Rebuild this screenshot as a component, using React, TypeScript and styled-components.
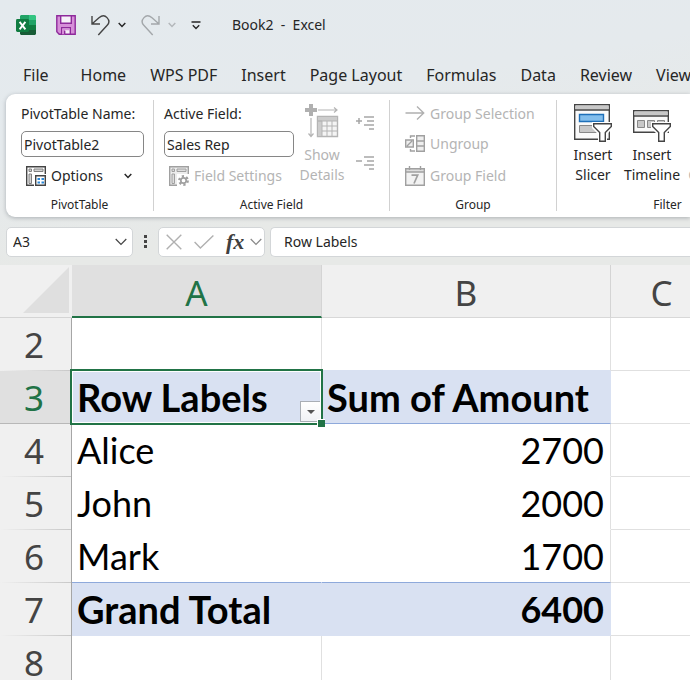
import React from "react";
import styled, { createGlobalStyle } from "styled-components";

const GlobalStyle = createGlobalStyle`
  * { box-sizing: border-box; }
  body { margin: 0; background: #fff; }
  button, input { font: inherit; color: inherit; margin: 0; padding: 0; border: 0; background: none; }
  button { cursor: pointer; }
  button:disabled { cursor: default; }
`;

const Window = styled.div`
  min-height: 100vh;
  overflow: hidden;
  display: flex;
  flex-direction: column;
  font-family: "Noto Sans", "Open Sans", sans-serif;
  font-size: 14px;
  line-height: 20px;
  color: #262626;
  background: linear-gradient(170deg, #e4eaee 0, #e5eaed 150px, #e7e9e7 270px);
  svg { display: block; flex: none; }
`;

const TitleBar = styled.header`
  display: flex;
  align-items: center;
  height: 50px;
  padding: 0 16px;
`;

const QuickTools = styled.div`
  display: flex;
  align-items: center;
  gap: 15px;
  margin-left: 20px;
`;

const ToolPair = styled.div`
  display: flex;
  align-items: center;
  gap: 8px;
`;

const IconButton = styled.button`
  display: flex;
  align-items: center;
  justify-content: center;
`;

const WindowTitle = styled.h1`
  margin: 0 0 0 31px;
  font-size: 14px;
  font-weight: 400;
  white-space: pre;
`;

const TabList = styled.nav`
  display: flex;
  align-items: center;
  gap: 24px;
  height: 44px;
  padding: 5px 0 0 23px;
  font-size: 16px;
`;

const Tab = styled.button<{ $file?: boolean }>`
  flex: none;
  white-space: nowrap;
  margin-right: ${(p) => (p.$file ? 8 : 0)}px;
`;

const Ribbon = styled.section`
  display: flex;
  margin-left: 6px;
  padding: 6px 0;
  background: #fff;
  border-radius: 9px 0 0 9px;
  box-shadow: 0 1px 4px rgba(60, 70, 80, 0.35);
`;

const Group = styled.div<{ $width: number }>`
  flex: none;
  width: ${(p) => p.$width}px;
  border-right: 1px solid #d1d1d1;
  display: flex;
  flex-direction: column;
`;

const GroupBody = styled.div<{ $pad: number }>`
  display: flex;
  height: 98px;
  padding-left: ${(p) => p.$pad}px;
`;

const GroupName = styled.div`
  font-size: 12px;
  line-height: 13px;
  text-align: center;
`;

const Stack = styled.div<{ $width: number }>`
  flex: none;
  width: ${(p) => p.$width}px;
  display: grid;
  grid-template-rows: 28px 32px 32px;
  align-items: center;
  white-space: nowrap;
`;

const Field = styled.input`
  width: 100%;
  height: 26px;
  padding: 0 2px;
  border: 1px solid #868686;
  border-radius: 5px;
  background: #fff;
`;

const Command = styled.button`
  display: flex;
  align-items: center;
  gap: 5px;
  padding-left: 5px;
  white-space: nowrap;
  &:disabled { color: #b4b4b4; }
`;

const OptionsCommand = styled(Command)`
  padding-right: 12px;
`;

const PlainCommand = styled(Command)`
  padding-left: 0;
`;

const CommandText = styled.span`
  flex: 1;
  text-align: left;
`;

const BigCommand = styled.button<{ $width: number }>`
  flex: none;
  width: ${(p) => p.$width}px;
  display: flex;
  flex-direction: column;
  align-items: center;
  gap: 3px;
  padding-top: 4px;
  height: 90px;
  &:disabled { color: #b4b4b4; }
`;

const SideCommands = styled.div`
  display: flex;
  flex-direction: column;
  gap: 24px;
  padding: 15px 0 0 6px;
`;

const FormulaBar = styled.div`
  display: flex;
  align-items: center;
  height: 48px;
  padding: 1px 0 0 6px;
`;

const BarBox = styled.div`
  display: flex;
  align-items: center;
  height: 30px;
  background: #fff;
  border: 1px solid #d3d6d8;
  border-radius: 5px;
`;

const NameBox = styled(BarBox)`
  flex: none;
  width: 127px;
  padding: 0 5px 0 6px;
`;

const FormulaTools = styled(BarBox)`
  flex: none;
  gap: 12px;
  width: 107px;
  padding: 0 3px 0 7px;
  margin-right: 5px;
`;

const FormulaBox = styled(BarBox)`
  flex: 1;
  padding-left: 13px;
  border-right: 0;
  border-radius: 5px 0 0 5px;
`;

const FxPair = styled(ToolPair)`
  gap: 6px;
`;

const BarInput = styled.input`
  flex: 1;
  min-width: 0;
  height: 28px;
`;

const Dots = styled.div`
  width: 25px;
  display: flex;
  justify-content: center;
`;

const SheetArea = styled.main`
  flex: 1;
  overflow: hidden;
  background: #fff;
`;

const Sheet = styled.table`
  width: 100%;
  min-width: 713px;
  table-layout: fixed;
  border-collapse: separate;
  border-spacing: 0;
  font-family: Lato, Carlito, sans-serif;
  font-size: 36px;
  line-height: 44px;
  color: #000;
`;

const Col = styled.col<{ $width?: number }>`
  width: ${(p) => (p.$width ? `${p.$width}px` : "auto")};
`;

const Corner = styled.td`
  padding: 0 3px 3px 0;
  background: #f0f0f0;
  border-bottom: 1px solid #d4d4d4;
  svg { margin-left: auto; }
`;

const HeadCell = styled.th<{ $active?: boolean }>`
  height: 53px;
  font-family: "Noto Sans", "Open Sans", sans-serif;
  font-size: 35px;
  font-weight: 400;
  color: ${(p) => (p.$active ? "#217346" : "#444")};
`;

const ColumnHead = styled(HeadCell)`
  padding: 4px 0 0;
  background: ${(p) => (p.$active ? "#e0e0e0" : "#f0f0f0")};
  border-bottom: ${(p) => (p.$active ? "2px solid #217346" : "1px solid #d8d8d8")};
  border-right: 1px solid #d4d4d4;
`;

const RowHead = styled(HeadCell)`
  padding: 1px 3px 0 0;
  background: ${(p) =>
    p.$active
      ? "linear-gradient(#b8b8b8, #b8b8b8) bottom / 100% 1px no-repeat #e0e0e0"
      : "linear-gradient(90deg, #f0f0f0, #c8c8c8) bottom / 100% 1px no-repeat #f0f0f0"};
  border-right: 1px solid #a6a6a6;
`;

type CellLook = { $band?: boolean; $number?: boolean; $line?: string; $open?: boolean };

const Cell = styled.td<CellLook>`
  position: relative;
  height: 53px;
  padding: 0 6px 0 5px;
  white-space: nowrap;
  text-align: ${(p) => (p.$number ? "right" : "left")};
  font-size: ${(p) => (p.$band && !p.$number ? 38 : 36)}px;
  font-weight: ${(p) => (p.$band ? 700 : 400)};
  background: ${(p) => (p.$band ? "#d9e1f2" : "#fff")};
  background-clip: padding-box;
  border-bottom: 1px solid ${(p) => p.$line ?? "#e0e0e0"};
  border-right: 1px solid ${(p) => (p.$band ? "#d9e1f2" : p.$open ? "#fff" : "#e0e0e0")};
`;

const Selection = styled.div`
  position: absolute;
  inset: -2px;
  border: 2px solid #217346;
  box-shadow: inset 0 0 0 1px #fff;
  pointer-events: none;
  z-index: 1;
  &::after {
    content: "";
    position: absolute;
    right: -4px;
    bottom: -4px;
    width: 7px;
    height: 7px;
    background: #217346;
    border: 1px solid #fff;
    border-width: 1px 0 0 1px;
  }
`;

const FilterButton = styled.button`
  position: absolute;
  right: 0;
  bottom: 1px;
  width: 21px;
  height: 21px;
  display: flex;
  align-items: center;
  justify-content: center;
  background: linear-gradient(#fff, #f0f2f5);
  border: 1px solid #a9aeb5;
`;

const Chevron = ({ w = 8, color = "#262626" }: { w?: number; color?: string }) => (
  <svg width={w} height={w / 2 + 2} viewBox={`0 0 ${w} ${w / 2 + 2}`} fill="none" stroke={color} strokeWidth={w > 8 ? 1.2 : 1.5}>
    <path d={`M.7 1 L${w / 2} ${w / 2 + 0.4} L${w - 0.7} 1`} />
  </svg>
);

const ExcelIcon = () => (
  <svg width="20" height="20" viewBox="0 0 20 20">
    <path d="M5 0h8v5H4V1z" fill="#21a366" />
    <path d="M13 0h6l1 1v4h-7z" fill="#33c481" />
    <path d="M4 5h9v5H4z" fill="#107c41" />
    <path d="M13 5h7v5h-7z" fill="#21a366" />
    <path d="M4 10h9v5H4z" fill="#185c37" />
    <path d="M13 10h7v5h-7z" fill="#107c41" />
    <path d="M4 15h16v4l-1 1H5l-1-1z" fill="#185c37" />
    <rect x="0" y="4" width="13" height="13" rx="1.4" fill="#107c41" />
    <path d="M3.6 6.8l5.8 7.6M9.4 6.8l-5.8 7.6" stroke="#fff" strokeWidth="1.9" />
  </svg>
);

const SaveIcon = () => (
  <svg width="20" height="20" viewBox="0 0 20 20" fill="#d68fd8" stroke="#8e2a9b" strokeWidth="1.4">
    <path d="M.8.8h18.4v18.4H3.2L.8 16.8z" />
    <path d="M4.7.8h10.6v7.4H4.7z" fill="#f6f0f8" />
    <path d="M5.7 19.2v-6.4h8.6v6.4z" fill="#f6f0f8" />
    <path d="M6 13.5h8v1.8H9v4H6z" fill="#d68fd8" stroke="none" />
    <path d="M8.7 19v-3.2" />
  </svg>
);

const UndoIcon = ({ color, flip }: { color: string; flip?: boolean }) => (
  <svg width="19" height="21" viewBox="0 0 19 21" fill="none" stroke={color} strokeWidth="1.4">
    <path
      transform={flip ? "translate(19 0) scale(-1 1)" : undefined}
      d="M1 1v8h8M1.2 8.8 8 2.8C11 .2 14 .4 16 2.6c2.4 2.6 2.2 5.6.2 7.7L7.3 20"
    />
  </svg>
);

const CustomizeIcon = () => (
  <svg width="10" height="9" viewBox="0 0 10 9" fill="none" stroke="#262626" strokeWidth="1.4">
    <path d="M.5 1h9M1.8 4.2 5 7.4l3.2-3.2" />
  </svg>
);

const OptionsIcon = () => (
  <svg width="20" height="20" viewBox="0 0 20 20" fill="none">
    <path d="M8 19.3H.7V.7h18.6V8" stroke="#444" strokeWidth="1.4" />
    <path d="M3 3h2.5v2.5H3zM8 3h9v2.5H8zM3 8h2.5v9.5H3z" fill="#d4d4d4" stroke="#808080" />
    <path d="M9.7 9.7h9.6v9.6H9.700z" fill="#fff" stroke="#444" strokeWidth="1.4" />
    <path d="M11.5 12H14v2h-2.500zM15.500 12H18v2h-2.500zM11.500 15.500H14v2h-2.500zM15.500 15.500H18v2h-2.500z" fill="#2b88d8" />
  </svg>
);

const SettingsIcon = () => (
  <svg width="20" height="20" viewBox="0 0 20 20" fill="none" stroke="#a0a0a0">
    <path d="M.7.7h18.600v18.600H.7z" fill="#ededed" stroke="none" />
    <path d="M8 19.300H.7V.7h18.600V8" strokeWidth="1.400" />
    <path d="M3 3h2.500v2.500H3zM8 3h9v2.500H8zM3 8h2.500v9.500H3z" fill="#ddd" />
    <path d="M8 8h12v12H8z" fill="#fff" stroke="none" />
    <circle cx="14.500" cy="14.500" r="4.200" strokeWidth="2.400" strokeDasharray="2.200 2.200" />
    <circle cx="14.500" cy="14.500" r="2.700" strokeWidth="1.700" />
  </svg>
);

const DetailsIcon = () => (
  <svg width="34" height="38" viewBox="0 0 34 38" fill="none" stroke="#b4b4b4">
    <path d="M6 0v12M0 6h12" stroke="#b0b0b0" strokeWidth="4" />
    <path d="M13 6h19M29 3.500 32 6l-3 2.500M6 14v18M3.500 29.500 6 32.500l2.500-3" strokeWidth="1.200" />
    <path d="M12.500 12.500h20v20h-20z" fill="#f4f4f4" strokeWidth="1.400" />
    <path d="M12.500 12.500h20v4.500h-20zM12.500 17H17v15.500h-4.500z" fill="#ccc" />
    <path d="M17 22h15.500M17 27h15.500M22 17v15.500M27 17v15.500" />
  </svg>
);

const OutlineIcon = ({ plus }: { plus?: boolean }) => (
  <svg width="18" height="16" viewBox="0 0 18 16" fill="none" stroke="#a6a6a6" strokeWidth="1.500">
    <path d="M8 2h10M11 6h7M8 10h10M13 14h5" />
    <path d={plus ? "M0 6h6M3 3v6" : "M0 6h6"} />
  </svg>
);

const ArrowIcon = () => (
  <svg width="20" height="20" viewBox="0 0 20 20" fill="none" stroke="#b0b0b0" strokeWidth="1.400">
    <path d="M.5 9h18M12 2.500 18.700 9 12 15.500" />
  </svg>
);

const UngroupIcon = () => (
  <svg width="20" height="20" viewBox="0 0 20 20" fill="none" stroke="#a0a0a0" strokeWidth="1.400">
    <path d="M.7 6h7.600v7H.7zM2 12l5-5" fill="#eee" />
    <path d="M5.500 4V2H10M5.500 15v2H10" />
    <path d="M11.700 1.700h7.600v15.600h-7.600zM11.700 7h7.600M11.700 12h7.600" fill="#eee" />
  </svg>
);

const CalendarIcon = () => (
  <svg width="20" height="20" viewBox="0 0 20 20" fill="none" stroke="#a0a0a0" strokeWidth="1.400">
    <path d="M.7 2.700h18.600v16.600H.7z" fill="#f2f2f2" />
    <path d="M.7 2.700h18.600V6H.7z" fill="#ddd" />
    <path d="M4.500 0v4M15.500 0v4" />
    <path d="M6.500 9.200h6.200L9 17.500" strokeWidth="1.700" />
  </svg>
);

const Funnel = () => (
  <>
    <path d="M18 18h21v6l-6 6v8h-9v-8l-6-6z" fill="#fff" />
    <path d="M19.700 19.700h17.600v2.800l-6 6v8.800h-5.600v-8.800l-6-6z" fill="#fff" stroke="#444" strokeWidth="1.400" />
  </>
);

const SlicerIcon = () => (
  <svg width="38" height="38" viewBox="0 0 38 38" fill="none">
    <path d="M.7.7h34.600v34.600H.7z" fill="#fafafa" stroke="#444" strokeWidth="1.400" />
    <path d="M1.400 1.400h33.200v4H1.400z" fill="#c8c8c8" />
    <path d="M1 6h34" stroke="#444" strokeWidth="1.400" />
    <path d="M5.500 10.500h24v7h-24z" fill="#83beec" stroke="#1e6fb8" strokeWidth="1.400" />
    <path d="M5.500 21.500h17v7h-17z" fill="#c8c8c8" stroke="#888" />
    <Funnel />
  </svg>
);

const TimelineIcon = () => (
  <svg width="38" height="38" viewBox="0 0 38 38" fill="none">
    <path d="M.7 6.700h34.600v21.600H.7z" fill="#fafafa" stroke="#444" strokeWidth="1.400" />
    <path d="M1.400 7.400h33.200V11H1.400z" fill="#c8c8c8" />
    <path d="M1 12h34" stroke="#444" strokeWidth="1.400" />
    <path d="M4.500 16.500h7v7h-7zM14.500 16.500h7v7h-7zM24.500 16.500h7v7h-7z" fill="#c8c8c8" stroke="#888" />
    <Funnel />
  </svg>
);

const CancelIcon = () => (
  <svg width="16" height="16" viewBox="0 0 16 16" stroke="#b0b0b0" strokeWidth="1.400">
    <path d="M.7.7l14.600 14.600M15.300.7.7 15.300" />
  </svg>
);

const CheckIcon = () => (
  <svg width="20" height="14" viewBox="0 0 20 14" fill="none" stroke="#b0b0b0" strokeWidth="1.400">
    <path d="M.6 7l5.800 6L19.400.6" />
  </svg>
);

const FxButton = styled(IconButton)`
  font-family: "Liberation Serif", serif;
  font-size: 22px;
  font-style: italic;
  font-weight: 700;
  line-height: 24px;
  color: #404040;
`;

const TABS = ["File", "Home", "WPS PDF", "Insert", "Page Layout", "Formulas", "Data", "Review", "View"];

type RowData = { n: number; label?: string; total?: string; kind?: "head" | "item" | "total" };

const ROWS: RowData[] = [
  { n: 2 },
  { n: 3, label: "Row Labels", total: "Sum of Amount", kind: "head" },
  { n: 4, label: "Alice", total: "2700", kind: "item" },
  { n: 5, label: "John", total: "2000", kind: "item" },
  { n: 6, label: "Mark", total: "1700", kind: "item" },
  { n: 7, label: "Grand Total", total: "6400", kind: "total" },
  { n: 8 },
];

const lineUnder = (row: RowData) => {
  if (row.n === 3 || row.n === 6) return "#8ea9db";
  if (row.n === 2 || row.kind === "total") return "#d9e1f2";
  return row.kind === "item" ? "#fff" : "#e0e0e0";
};

export default function App() {
  return (
    <Window>
      <GlobalStyle />
      <TitleBar>
        <ExcelIcon />
        <QuickTools>
          <IconButton aria-label="Save"><SaveIcon /></IconButton>
          <ToolPair>
            <IconButton aria-label="Undo"><UndoIcon color="#444" /></IconButton>
            <IconButton aria-label="Undo history"><Chevron /></IconButton>
          </ToolPair>
          <ToolPair>
            <IconButton aria-label="Redo" disabled><UndoIcon color="#a3a7aa" flip /></IconButton>
            <IconButton aria-label="Redo history" disabled><Chevron color="#b4b8bb" /></IconButton>
          </ToolPair>
          <IconButton aria-label="Customize toolbar"><CustomizeIcon /></IconButton>
        </QuickTools>
        <WindowTitle>{"Book2  -  Excel"}</WindowTitle>
      </TitleBar>
      <TabList>
        {TABS.map((t) => <Tab key={t} $file={t === "File"}>{t}</Tab>)}
      </TabList>
      <Ribbon>
        <Group $width={148}>
          <GroupBody $pad={15}>
            <Stack $width={123}>
              <label htmlFor="pivot-name">PivotTable Name:</label>
              <Field id="pivot-name" defaultValue="PivotTable2" />
              <OptionsCommand><OptionsIcon /><CommandText>Options</CommandText><Chevron /></OptionsCommand>
            </Stack>
          </GroupBody>
          <GroupName>PivotTable</GroupName>
        </Group>
        <Group $width={236}>
          <GroupBody $pad={10}>
            <Stack $width={130}>
              <label htmlFor="active-field">Active Field:</label>
              <Field id="active-field" defaultValue="Sales Rep" />
              <Command disabled><SettingsIcon /><CommandText>Field Settings</CommandText></Command>
            </Stack>
            <BigCommand $width={56} disabled><DetailsIcon /><span>Show<br />Details</span></BigCommand>
            <SideCommands>
              <IconButton aria-label="Expand field" disabled><OutlineIcon plus /></IconButton>
              <IconButton aria-label="Collapse field" disabled><OutlineIcon /></IconButton>
            </SideCommands>
          </GroupBody>
          <GroupName>Active Field</GroupName>
        </Group>
        <Group $width={167}>
          <GroupBody $pad={15}>
            <Stack $width={140}>
              <PlainCommand disabled><ArrowIcon />Group Selection</PlainCommand>
              <PlainCommand disabled><UngroupIcon />Ungroup</PlainCommand>
              <PlainCommand disabled><CalendarIcon />Group Field</PlainCommand>
            </Stack>
          </GroupBody>
          <GroupName>Group</GroupName>
        </Group>
        <Group $width={222}>
          <GroupBody $pad={8}>
            <BigCommand $width={56}><SlicerIcon /><span>Insert<br />Slicer</span></BigCommand>
            <BigCommand $width={62}><TimelineIcon /><span>Insert<br />Timeline</span></BigCommand>
            <BigCommand $width={92} disabled><DetailsIcon /><span>Filter<br />Connections</span></BigCommand>
          </GroupBody>
          <GroupName>Filter</GroupName>
        </Group>
      </Ribbon>
      <FormulaBar>
        <NameBox>
          <BarInput aria-label="Name box" defaultValue="A3" />
          <IconButton aria-label="Names"><Chevron w={12} color="#444" /></IconButton>
        </NameBox>
        <Dots>
          <svg width="4" height="14" viewBox="0 0 4 14" fill="#444">
            <path d="M0 0h3v3H0zM0 5h3v3H0zM0 10h3v3H0z" />
          </svg>
        </Dots>
        <FormulaTools>
          <IconButton aria-label="Cancel" disabled><CancelIcon /></IconButton>
          <IconButton aria-label="Enter" disabled><CheckIcon /></IconButton>
          <FxPair>
            <FxButton aria-label="Insert function">fx</FxButton>
            <IconButton aria-label="Function list"><Chevron w={12} color="#888" /></IconButton>
          </FxPair>
        </FormulaTools>
        <FormulaBox>
          <BarInput aria-label="Formula" defaultValue="Row Labels" />
        </FormulaBox>
      </FormulaBar>
      <SheetArea>
        <Sheet>
          <colgroup>
            <Col $width={72} /><Col $width={250} /><Col $width={289} /><Col />
          </colgroup>
          <thead>
            <tr>
              <Corner>
                <svg width="46" height="46" viewBox="0 0 46 46"><path d="M46 0v46H0z" fill="#dfdfdf" /></svg>
              </Corner>
              <ColumnHead scope="col" $active>A</ColumnHead>
              <ColumnHead scope="col">B</ColumnHead>
              <ColumnHead scope="col">C</ColumnHead>
            </tr>
          </thead>
          <tbody>
            {ROWS.map((row) => {
              const band = row.kind === "head" || row.kind === "total";
              return (
                <tr key={row.n}>
                  <RowHead scope="row" $active={row.n === 3}>{row.n}</RowHead>
                  <Cell $band={band} $line={lineUnder(row)} $open={row.kind === "item"}>
                    {row.label}
                    {row.kind === "head" && (
                      <>
                        <FilterButton aria-label="Filter row labels">
                          <svg width="8" height="4" viewBox="0 0 8 4"><path d="M0 0h8L4 4z" fill="#555" /></svg>
                        </FilterButton>
                        <Selection />
                      </>
                    )}
                  </Cell>
                  <Cell $band={band} $line={lineUnder(row)} $number={row.kind !== "head"}>{row.total}</Cell>
                  <Cell />
                </tr>
              );
            })}
          </tbody>
        </Sheet>
      </SheetArea>
    </Window>
  );
}
